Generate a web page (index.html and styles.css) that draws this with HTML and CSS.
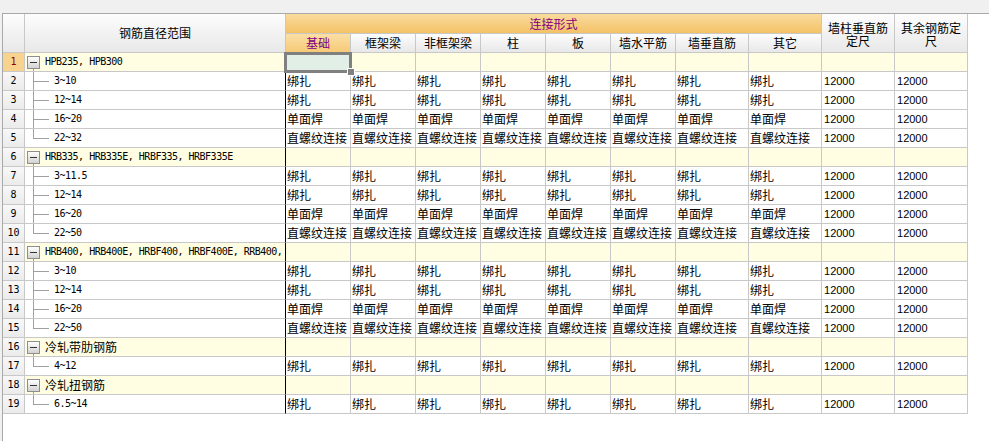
FILE: index.html
```html
<!DOCTYPE html>
<html lang="zh-CN">
<head>
<meta charset="utf-8">
<title>钢筋连接设置</title>
<link rel="stylesheet" href="styles.css">
</head>
<body>
<div class="panel">
<table class="grid">
<colgroup>
<col class="w-num"><col class="w-name">
<col class="w-a"><col class="w-a"><col class="w-a"><col class="w-a"><col class="w-a"><col class="w-a">
<col class="w-b"><col class="w-b"><col class="w-b"><col class="w-b">
</colgroup>
<thead>
<tr class="h1">
<th class="corner" rowspan="2"></th>
<th class="hd" rowspan="2">钢筋直径范围</th>
<th class="conn" colspan="8">连接形式</th>
<th class="hd two" rowspan="2">墙柱垂直筋<br>定尺</th>
<th class="hd two" rowspan="2">其余钢筋定<br>尺</th>
</tr>
<tr class="h2">
<th class="sub active">基础</th>
<th class="sub">框架梁</th>
<th class="sub">非框架梁</th>
<th class="sub">柱</th>
<th class="sub">板</th>
<th class="sub">墙水平筋</th>
<th class="sub">墙垂直筋</th>
<th class="sub">其它</th>
</tr>
</thead>
<tbody>
<tr class="grp">
<td class="num cur">1</td>
<td class="name"><span class="tog"></span><span class="code">HPB235, HPB300</span></td>
<td class="cell focus"><span class="focus-box"></span></td>
<td class="cell"></td><td class="cell"></td><td class="cell"></td><td class="cell"></td><td class="cell"></td><td class="cell"></td><td class="cell"></td><td class="cell"></td><td class="cell"></td>
</tr>
<tr>
<td class="num">2</td>
<td class="name"><span class="branch"></span><span class="code">3~10</span></td>
<td class="cell">绑扎</td><td class="cell">绑扎</td><td class="cell">绑扎</td><td class="cell">绑扎</td><td class="cell">绑扎</td><td class="cell">绑扎</td><td class="cell">绑扎</td><td class="cell">绑扎</td>
<td class="cell n">12000</td><td class="cell n">12000</td>
</tr>
<tr>
<td class="num">3</td>
<td class="name"><span class="branch"></span><span class="code">12~14</span></td>
<td class="cell">绑扎</td><td class="cell">绑扎</td><td class="cell">绑扎</td><td class="cell">绑扎</td><td class="cell">绑扎</td><td class="cell">绑扎</td><td class="cell">绑扎</td><td class="cell">绑扎</td>
<td class="cell n">12000</td><td class="cell n">12000</td>
</tr>
<tr>
<td class="num">4</td>
<td class="name"><span class="branch"></span><span class="code">16~20</span></td>
<td class="cell">单面焊</td><td class="cell">单面焊</td><td class="cell">单面焊</td><td class="cell">单面焊</td><td class="cell">单面焊</td><td class="cell">单面焊</td><td class="cell">单面焊</td><td class="cell">单面焊</td>
<td class="cell n">12000</td><td class="cell n">12000</td>
</tr>
<tr>
<td class="num">5</td>
<td class="name"><span class="branch last"></span><span class="code">22~32</span></td>
<td class="cell">直螺纹连接</td><td class="cell">直螺纹连接</td><td class="cell">直螺纹连接</td><td class="cell">直螺纹连接</td><td class="cell">直螺纹连接</td><td class="cell">直螺纹连接</td><td class="cell">直螺纹连接</td><td class="cell">直螺纹连接</td>
<td class="cell n">12000</td><td class="cell n">12000</td>
</tr>
<tr class="grp">
<td class="num">6</td>
<td class="name"><span class="tog"></span><span class="code">HRB335, HRB335E, HRBF335, HRBF335E</span></td>
<td class="cell"></td><td class="cell"></td><td class="cell"></td><td class="cell"></td><td class="cell"></td><td class="cell"></td><td class="cell"></td><td class="cell"></td><td class="cell"></td><td class="cell"></td>
</tr>
<tr>
<td class="num">7</td>
<td class="name"><span class="branch"></span><span class="code">3~11.5</span></td>
<td class="cell">绑扎</td><td class="cell">绑扎</td><td class="cell">绑扎</td><td class="cell">绑扎</td><td class="cell">绑扎</td><td class="cell">绑扎</td><td class="cell">绑扎</td><td class="cell">绑扎</td>
<td class="cell n">12000</td><td class="cell n">12000</td>
</tr>
<tr>
<td class="num">8</td>
<td class="name"><span class="branch"></span><span class="code">12~14</span></td>
<td class="cell">绑扎</td><td class="cell">绑扎</td><td class="cell">绑扎</td><td class="cell">绑扎</td><td class="cell">绑扎</td><td class="cell">绑扎</td><td class="cell">绑扎</td><td class="cell">绑扎</td>
<td class="cell n">12000</td><td class="cell n">12000</td>
</tr>
<tr>
<td class="num">9</td>
<td class="name"><span class="branch"></span><span class="code">16~20</span></td>
<td class="cell">单面焊</td><td class="cell">单面焊</td><td class="cell">单面焊</td><td class="cell">单面焊</td><td class="cell">单面焊</td><td class="cell">单面焊</td><td class="cell">单面焊</td><td class="cell">单面焊</td>
<td class="cell n">12000</td><td class="cell n">12000</td>
</tr>
<tr>
<td class="num">10</td>
<td class="name"><span class="branch last"></span><span class="code">22~50</span></td>
<td class="cell">直螺纹连接</td><td class="cell">直螺纹连接</td><td class="cell">直螺纹连接</td><td class="cell">直螺纹连接</td><td class="cell">直螺纹连接</td><td class="cell">直螺纹连接</td><td class="cell">直螺纹连接</td><td class="cell">直螺纹连接</td>
<td class="cell n">12000</td><td class="cell n">12000</td>
</tr>
<tr class="grp">
<td class="num">11</td>
<td class="name"><span class="tog"></span><span class="code">HRB400, HRB400E, HRBF400, HRBF400E, RRB400,</span></td>
<td class="cell"></td><td class="cell"></td><td class="cell"></td><td class="cell"></td><td class="cell"></td><td class="cell"></td><td class="cell"></td><td class="cell"></td><td class="cell"></td><td class="cell"></td>
</tr>
<tr>
<td class="num">12</td>
<td class="name"><span class="branch"></span><span class="code">3~10</span></td>
<td class="cell">绑扎</td><td class="cell">绑扎</td><td class="cell">绑扎</td><td class="cell">绑扎</td><td class="cell">绑扎</td><td class="cell">绑扎</td><td class="cell">绑扎</td><td class="cell">绑扎</td>
<td class="cell n">12000</td><td class="cell n">12000</td>
</tr>
<tr>
<td class="num">13</td>
<td class="name"><span class="branch"></span><span class="code">12~14</span></td>
<td class="cell">绑扎</td><td class="cell">绑扎</td><td class="cell">绑扎</td><td class="cell">绑扎</td><td class="cell">绑扎</td><td class="cell">绑扎</td><td class="cell">绑扎</td><td class="cell">绑扎</td>
<td class="cell n">12000</td><td class="cell n">12000</td>
</tr>
<tr>
<td class="num">14</td>
<td class="name"><span class="branch"></span><span class="code">16~20</span></td>
<td class="cell">单面焊</td><td class="cell">单面焊</td><td class="cell">单面焊</td><td class="cell">单面焊</td><td class="cell">单面焊</td><td class="cell">单面焊</td><td class="cell">单面焊</td><td class="cell">单面焊</td>
<td class="cell n">12000</td><td class="cell n">12000</td>
</tr>
<tr>
<td class="num">15</td>
<td class="name"><span class="branch last"></span><span class="code">22~50</span></td>
<td class="cell">直螺纹连接</td><td class="cell">直螺纹连接</td><td class="cell">直螺纹连接</td><td class="cell">直螺纹连接</td><td class="cell">直螺纹连接</td><td class="cell">直螺纹连接</td><td class="cell">直螺纹连接</td><td class="cell">直螺纹连接</td>
<td class="cell n">12000</td><td class="cell n">12000</td>
</tr>
<tr class="grp">
<td class="num">16</td>
<td class="name"><span class="tog"></span><span class="cjk">冷轧带肋钢筋</span></td>
<td class="cell"></td><td class="cell"></td><td class="cell"></td><td class="cell"></td><td class="cell"></td><td class="cell"></td><td class="cell"></td><td class="cell"></td><td class="cell"></td><td class="cell"></td>
</tr>
<tr>
<td class="num">17</td>
<td class="name"><span class="branch last"></span><span class="code">4~12</span></td>
<td class="cell">绑扎</td><td class="cell">绑扎</td><td class="cell">绑扎</td><td class="cell">绑扎</td><td class="cell">绑扎</td><td class="cell">绑扎</td><td class="cell">绑扎</td><td class="cell">绑扎</td>
<td class="cell n">12000</td><td class="cell n">12000</td>
</tr>
<tr class="grp">
<td class="num">18</td>
<td class="name"><span class="tog"></span><span class="cjk">冷轧扭钢筋</span></td>
<td class="cell"></td><td class="cell"></td><td class="cell"></td><td class="cell"></td><td class="cell"></td><td class="cell"></td><td class="cell"></td><td class="cell"></td><td class="cell"></td><td class="cell"></td>
</tr>
<tr>
<td class="num">19</td>
<td class="name"><span class="branch last"></span><span class="code">6.5~14</span></td>
<td class="cell">绑扎</td><td class="cell">绑扎</td><td class="cell">绑扎</td><td class="cell">绑扎</td><td class="cell">绑扎</td><td class="cell">绑扎</td><td class="cell">绑扎</td><td class="cell">绑扎</td>
<td class="cell n">12000</td><td class="cell n">12000</td>
</tr>
</tbody>
</table>
</div>
</body>
</html>
```
FILE: styles.css
```css
* { box-sizing: border-box; }
html, body { margin: 0; padding: 0; }
body {
  background: #f0f0f0;
  font-family: "Noto Sans CJK SC", sans-serif;
  font-size: 12px;
  color: #000;
  height: 441px;
  overflow: hidden;
}
.panel {
  margin: 13px 0 0 2px;
  height: 428px;
  background: #fff;
  border-top: 1px solid #a9a9a9;
  border-left: 1px solid #a9a9a9;
}
.grid {
  border-collapse: separate;
  border-spacing: 0;
  table-layout: fixed;
  width: 965px;
}
.w-num { width: 22px; }
.w-name { width: 261px; }
.w-a { width: 65px; }
.w-b { width: 73px; }

th, td {
  padding: 0;
  border-right: 1px solid #c8c8c8;
  border-bottom: 1px solid #c8c8c8;
  font-weight: normal;
  white-space: nowrap;
  overflow: hidden;
}
td { line-height: 18px; height: 19px; }
.h1 { height: 20px; }
.h2 { height: 19px; }
tbody tr { height: 19px; }

th {
  background: linear-gradient(#fdfdfd, #e8e8e8);
  text-align: center;
  vertical-align: middle;
  line-height: 16px;
}
th.two { line-height: 13px; padding-top: 1px; }
th.conn {
  background: linear-gradient(#fadb9f, #f3c266);
  color: #800080;
}
th.active {
  background: linear-gradient(#fbdfa6, #f6ca76);
  color: #800080;
}

td.num {
  text-align: center;
  font-family: "DejaVu Sans Mono", monospace;
  font-size: 10px;
  background: linear-gradient(#f8f8f8, #ebebeb);
}
td.num.cur {
  background: #f8d38e;
  color: #8b0000;
}
td.name {
  padding-left: 2px;
  border-right: 1px solid #000;
  font-family: "DejaVu Sans Mono", monospace;
  font-size: 10px;
}
tr.grp td.name, tr.grp td.cell { background: #fffee2; }

.code, .cjk {
  display: inline-block;
  vertical-align: top;
  height: 18px;
  line-height: 18px;
}
.code {
  font-family: "DejaVu Sans Mono", monospace;
  font-size: 10px;
  letter-spacing: -0.5px;
}
.cjk {
  font-family: "Noto Sans CJK SC", sans-serif;
  font-size: 12px;
}

.tog {
  display: inline-block;
  width: 13px;
  height: 13px;
  border: 1px solid #8e8e8e;
  background: linear-gradient(#ffffff, #d2d2d2);
  vertical-align: top;
  margin-top: 3px;
  margin-right: 5px;
  position: relative;
}
.tog::before {
  content: "";
  position: absolute;
  left: 2px;
  right: 2px;
  top: 5px;
  height: 1px;
  background: #333;
}
.tog::after {
  content: "";
  position: absolute;
  left: 5px;
  top: 12px;
  height: 6px;
  border-left: 1px solid #a0a0a0;
}
.branch {
  display: inline-block;
  width: 16px;
  height: 18px;
  vertical-align: top;
  margin-left: 6px;
  margin-right: 5px;
  position: relative;
}
.branch::before {
  content: "";
  position: absolute;
  left: 0;
  top: 0;
  bottom: 0;
  border-left: 1px solid #a0a0a0;
}
.branch.last::before { bottom: auto; height: 10px; }
.branch::after {
  content: "";
  position: absolute;
  left: 0;
  right: 0;
  top: 9px;
  border-top: 1px solid #a0a0a0;
}

td.cell { padding-left: 1px; background: #fff; }
td.n {
  font-family: "Liberation Sans", sans-serif;
  font-size: 11px;
  padding-left: 2px;
}
td.focus {
  position: relative;
  overflow: visible;
  background: #e1efe7 !important;
}
.focus-box {
  position: absolute;
  left: -2px;
  top: -1px;
  width: 68px;
  height: 21px;
  border: 3px solid #808080;
}
.focus-box::after {
  content: "";
  position: absolute;
  right: -6px;
  bottom: -6px;
  width: 6px;
  height: 6px;
  background: #808080;
  border: 1px solid #fff;
}
```
